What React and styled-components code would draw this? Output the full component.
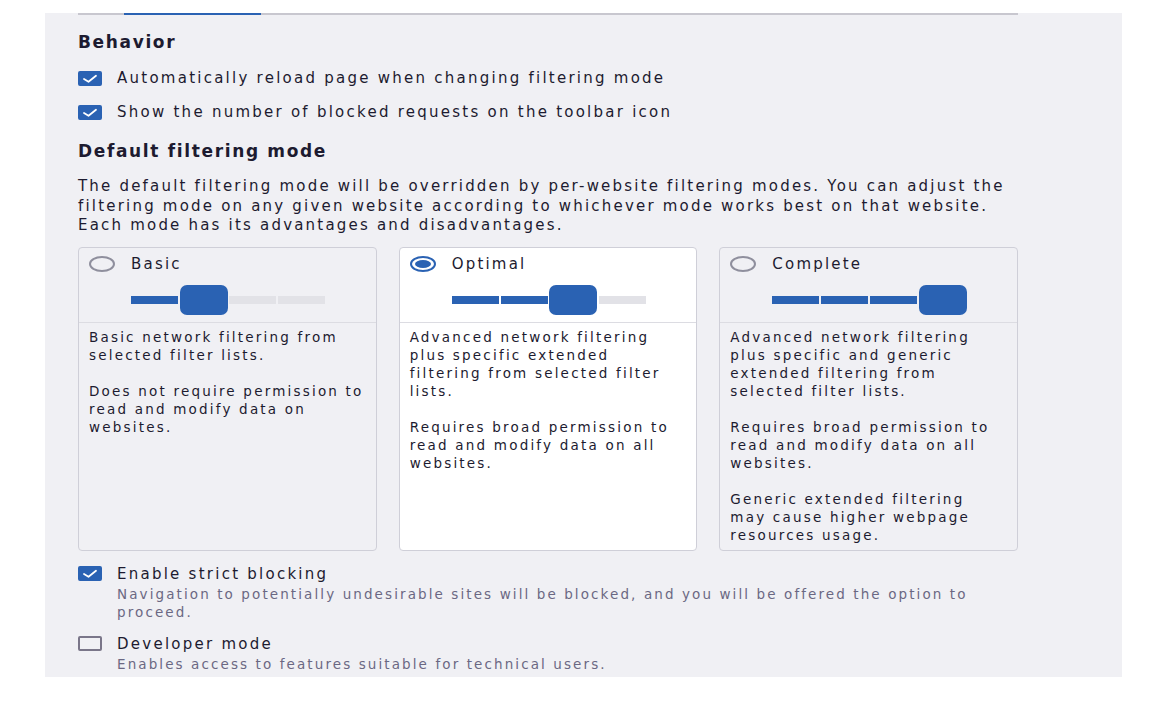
import styled, { createGlobalStyle } from "styled-components";

const GlobalStyle = createGlobalStyle`
  body {
    margin: 0;
    background: #ffffff;
    font-family: "DejaVu Sans", "Liberation Sans", sans-serif;
    color: #1d1b30;
  }
`;

const BLUE = "#2a62b3";

const Panel = styled.div`
  margin: 13px 0 0 45px;
  width: 1077px;
  background: #f0f0f4;
  padding: 0 104px 4px 33px;
  box-sizing: border-box;
`;

const TabRule = styled.div`
  height: 2px;
  background: #c8c7cf;
`;

const TabIndicator = styled.div`
  margin-left: 46px;
  width: 137px;
  height: 2px;
  background: ${BLUE};
`;

const Heading = styled.h2`
  margin: ${(p) => p.$top}px 0 0;
  font-size: 17px;
  line-height: 22px;
  font-weight: bold;
  letter-spacing: 1.65px;
`;

const Intro = styled.p`
  margin: 15px 0 0;
  font-size: 15px;
  line-height: 19.5px;
  letter-spacing: 2.2px;
  white-space: nowrap;
`;

const OptionRow = styled.div`
  display: grid;
  grid-template-columns: 24px 1fr;
  column-gap: 15px;
  align-items: center;
  margin-top: ${(p) => p.$top}px;
`;

const Box = styled.span`
  width: 24px;
  height: 15px;
  box-sizing: border-box;
  border-radius: 2px;
  display: flex;
  align-items: center;
  justify-content: center;
  background: ${(p) => (p.$checked ? BLUE : "transparent")};
  border: 2px solid ${(p) => (p.$checked ? BLUE : "#7a7689")};
`;

const OptionLabel = styled.span`
  font-size: 15px;
  line-height: 22px;
  letter-spacing: 2.25px;
`;

const OptionNote = styled.span`
  grid-column: 2;
  font-size: 13.5px;
  line-height: 18px;
  letter-spacing: 2.1px;
  color: #6b6883;
  white-space: nowrap;
`;

const Cards = styled.div`
  display: grid;
  grid-template-columns: repeat(3, 1fr);
  column-gap: 22px;
  margin-top: 11px;
`;

const Card = styled.div`
  border: 1px solid #cfcfd8;
  border-radius: 4px;
  background: ${(p) => (p.$selected ? "#ffffff" : "transparent")};
`;

const CardHead = styled.div`
  display: grid;
  grid-template-columns: 52px 1fr;
  align-items: center;
  padding: 7px 0 7px;
  border-bottom: 1px solid #dcdce2;
`;

const Radio = styled.span`
  position: relative;
  margin-left: 10px;
  width: 26px;
  height: 16px;
  box-sizing: border-box;
  border-radius: 50%;
  border: 2px solid ${(p) => (p.$checked ? BLUE : "#8f8f9d")};
  background: ${(p) => (p.$checked ? "#ffffff" : "transparent")};

  &::after {
    content: "";
    display: ${(p) => (p.$checked ? "block" : "none")};
    position: absolute;
    inset: 2px 3px;
    border-radius: 50%;
    background: ${BLUE};
  }
`;

const ModeName = styled.span`
  font-size: 15px;
  line-height: 18px;
  letter-spacing: 2.2px;
`;

const Slider = styled.div`
  grid-column: 2;
  margin-top: 12px;
  display: flex;
  align-items: center;
  gap: 2px;
  width: 194px;
  height: 30px;
`;

const Segment = styled.span`
  width: 47px;
  height: 8px;
  background: ${(p) => (p.$filled ? BLUE : "#e2e2e7")};
`;

const Thumb = styled.span`
  width: 48px;
  height: 30px;
  margin: 0 -0.5px;
  border-radius: 7px;
  background: ${BLUE};
`;

const CardBody = styled.div`
  padding: 5px 10px 6px;
  font-size: 13.5px;
  line-height: 18px;
  letter-spacing: 2.2px;
  white-space: nowrap;

  p {
    margin: 0 0 18px;
  }
  p:last-child {
    margin-bottom: 0;
  }
`;

const Check = () => (
  <svg width="20" height="11" viewBox="0 0 20 11">
    <polyline
      points="4,6 8.5,8.8 16,2.8"
      fill="none"
      stroke="#ffffff"
      strokeWidth="1.8"
      strokeLinecap="round"
      strokeLinejoin="round"
    />
  </svg>
);

const Lines = ({ lines }) =>
  lines.map((l, i) => (
    <span key={i}>
      {l}
      {i < lines.length - 1 && <br />}
    </span>
  ));

const modes = [
  {
    name: "Basic",
    level: 1,
    text: [
      ["Basic network filtering from", "selected filter lists."],
      ["Does not require permission to", "read and modify data on", "websites."],
    ],
  },
  {
    name: "Optimal",
    level: 2,
    selected: true,
    text: [
      [
        "Advanced network filtering",
        "plus specific extended",
        "filtering from selected filter",
        "lists.",
      ],
      ["Requires broad permission to", "read and modify data on all", "websites."],
    ],
  },
  {
    name: "Complete",
    level: 3,
    text: [
      [
        "Advanced network filtering",
        "plus specific and generic",
        "extended filtering from",
        "selected filter lists.",
      ],
      ["Requires broad permission to", "read and modify data on all", "websites."],
      ["Generic extended filtering", "may cause higher webpage", "resources usage."],
    ],
  },
];

const LevelSlider = ({ level }) => (
  <Slider>
    {[0, 1, 2, 3].map((i) =>
      i === level ? <Thumb key={i} /> : <Segment key={i} $filled={i < level} />
    )}
  </Slider>
);

const Option = ({ checked, label, note, top }) => (
  <OptionRow $top={top}>
    <Box $checked={checked}>{checked && <Check />}</Box>
    <OptionLabel>{label}</OptionLabel>
    {note && (
      <OptionNote>
        <Lines lines={note} />
      </OptionNote>
    )}
  </OptionRow>
);

const App = () => {
  return (
    <>
      <GlobalStyle />
      <Panel>
        <TabRule>
          <TabIndicator />
        </TabRule>

        <Heading $top={16}>Behavior</Heading>
        <Option checked top={14} label="Automatically reload page when changing filtering mode" />
        <Option checked top={12} label="Show the number of blocked requests on the toolbar icon" />

        <Heading $top={17}>Default filtering mode</Heading>
        <Intro>
          <Lines
            lines={[
              "The default filtering mode will be overridden by per-website filtering modes. You can adjust the",
              "filtering mode on any given website according to whichever mode works best on that website.",
              "Each mode has its advantages and disadvantages.",
            ]}
          />
        </Intro>

        <Cards>
          {modes.map((m) => (
            <Card key={m.name} $selected={m.selected}>
              <CardHead>
                <Radio $checked={m.selected} />
                <ModeName>{m.name}</ModeName>
                <LevelSlider level={m.level} />
              </CardHead>
              <CardBody>
                {m.text.map((para, i) => (
                  <p key={i}>
                    <Lines lines={para} />
                  </p>
                ))}
              </CardBody>
            </Card>
          ))}
        </Cards>

        <Option
          checked
          top={12}
          label="Enable strict blocking"
          note={[
            "Navigation to potentially undesirable sites will be blocked, and you will be offered the option to",
            "proceed.",
          ]}
        />
        <Option
          top={12}
          label="Developer mode"
          note={["Enables access to features suitable for technical users."]}
        />
      </Panel>
    </>
  );
};

export default App;
